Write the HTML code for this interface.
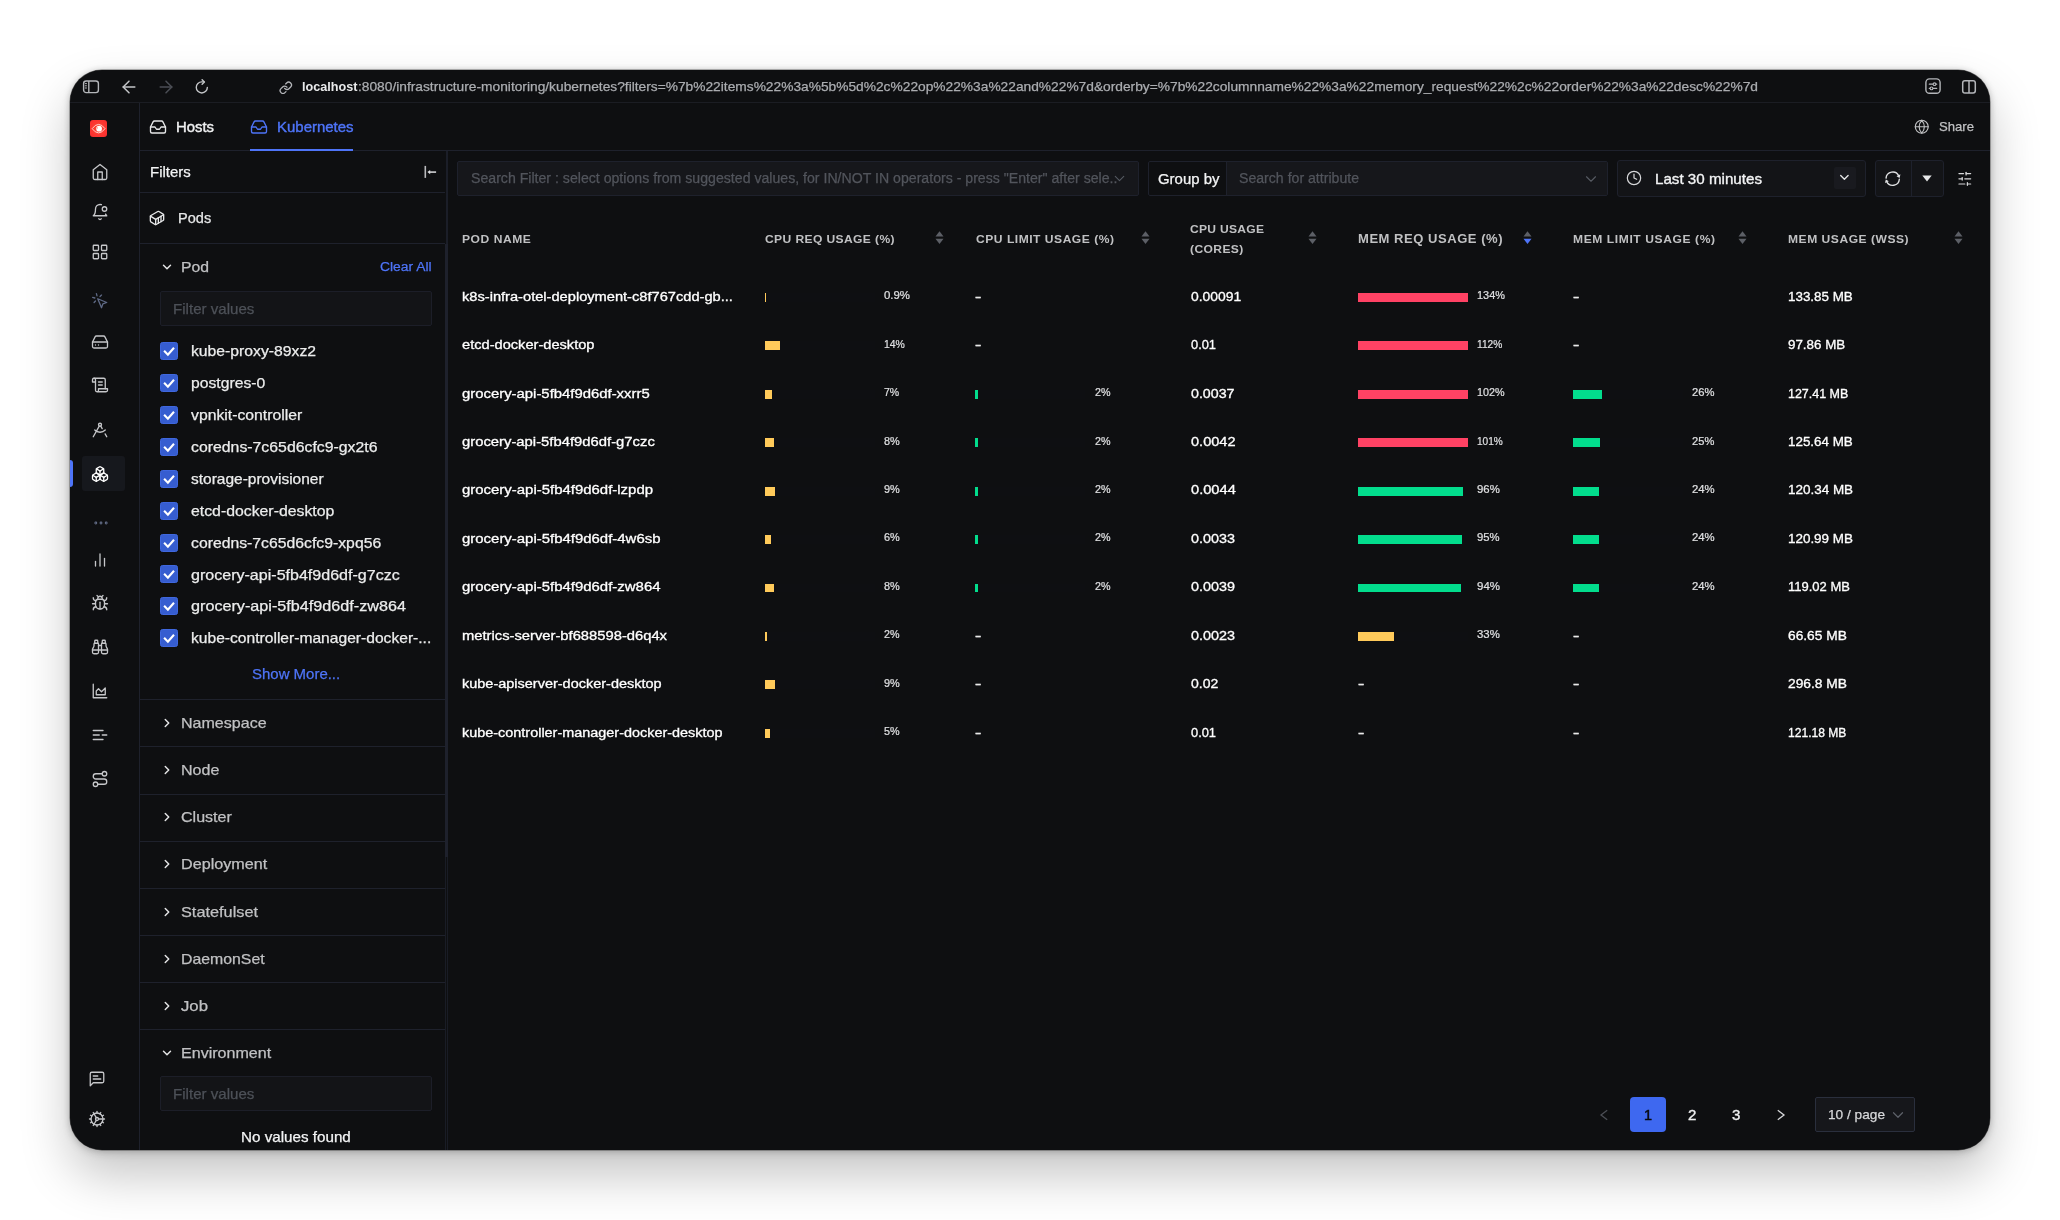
<!DOCTYPE html><html><head><meta charset="utf-8"><title>Infrastructure Monitoring</title><style>
html,body{margin:0;padding:0;background:#fff;}body{width:2060px;height:1220px;position:relative;overflow:hidden;font-family:"Liberation Sans", sans-serif;}.a{position:absolute;box-sizing:border-box;}.t{position:absolute;white-space:pre;}#win{position:absolute;left:70px;top:70px;width:1920px;height:1080px;border-radius:32px;background:#0e0f11;box-shadow:0 25px 50px rgba(0,0,0,0.23), 0 3px 10px rgba(0,0,0,0.14), 0 0 6px rgba(0,0,0,0.14), 0 0 0 0.5px rgba(0,0,0,0.5);}#clip{position:absolute;left:70px;top:70px;width:1920px;height:1080px;border-radius:32px;overflow:hidden;}#in{position:absolute;left:-70px;top:-70px;width:2060px;height:1220px;will-change:transform;}
</style></head><body><div id="win"></div><div id="clip"><div id="in">
<div class="a" style="left:70px;top:102px;width:1920px;height:1px;background:#1b1d23;"></div>
<svg class="a" style="left:82px;top:79px" width="18" height="16" viewBox="0 0 18 16" fill="none" stroke="#b4b6ba" stroke-width="1.4"><rect x="1.6" y="2" width="14.8" height="11.6" rx="2.6"/><path d="M6.800 2v11.600"/><path d="M2.9 4.6h2M2.9 6.8h2M2.9 9h2" stroke-width="1" /></svg>
<svg class="a" style="left:118.50px;top:76.80px;" width="20" height="20" viewBox="0 0 24 24" fill="none" stroke="#c4c6c9" stroke-width="1.8" stroke-linecap="round" stroke-linejoin="round"><path d="m12 19-7-7 7-7"/><path d="M19 12H5"/></svg>
<svg class="a" style="left:155.50px;top:76.80px;" width="20" height="20" viewBox="0 0 24 24" fill="none" stroke="#4b4e55" stroke-width="1.8" stroke-linecap="round" stroke-linejoin="round"><path d="M5 12h14"/><path d="m12 5 7 7-7 7"/></svg>
<svg class="a" style="left:194.20px;top:79.40px;" width="15.6" height="15.6" viewBox="0 0 24 24" fill="none" stroke="#c4c6c9" stroke-width="2.1" stroke-linecap="round" stroke-linejoin="round"><path d="M20.500 13a8.500 8.500 0 1 1-8.500-8.500h3.500"/><path d="M12.500 1 16 4.500 12.500 8"/></svg>
<svg class="a" style="left:279.00px;top:80.50px;" width="13.6" height="13.6" viewBox="0 0 24 24" fill="none" stroke="#b4b6ba" stroke-width="2.3" stroke-linecap="round" stroke-linejoin="round"><path d="M10 13a5 5 0 0 0 7.540.540l3-3a5 5 0 0 0-7.070-7.070l-1.720 1.710"/><path d="M14 11a5 5 0 0 0-7.540-.540l-3 3a5 5 0 0 0 7.070 7.070l1.710-1.710"/></svg>
<svg class="a" style="left:1924px;top:77px" width="18" height="18" viewBox="0 0 18 18" fill="none" stroke="#b4b6ba" stroke-width="1.4" stroke-linecap="round"><rect x="1.900" y="1.900" width="14.200" height="14.400" rx="3.600"/><path d="M5.300 7.200h7.400M5.300 11.400h7.400" stroke-width="1.200"/><circle cx="10.500" cy="7.200" r="1.350" fill="#0e0f11" stroke-width="1.100"/><circle cx="7.500" cy="11.400" r="1.350" fill="#0e0f11" stroke-width="1.100"/></svg>
<svg class="a" style="left:1960px;top:78px" width="18" height="17" viewBox="0 0 18 17" fill="none" stroke="#b4b6ba" stroke-width="1.5"><rect x="2.700" y="2.750" width="12.600" height="12.300" rx="2.200"/><path d="M9 2.750v12.300"/></svg>
<div class="a" style="left:139px;top:103px;width:1px;height:1047px;background:#1e212c;"></div>
<div class="a" style="left:90px;top:120px;width:17px;height:17px;border-radius:3px;background:radial-gradient(circle at 50% 50%,#ff4a35 0%,#fb3530 60%,#f72c2e 100%);"></div>
<svg class="a" style="left:90px;top:120px" width="17" height="17" viewBox="0 0 17 17" fill="none"><path d="M2.200 8.650Q5.200 4.400 8.600 4.400Q12 4.400 15 8.650Q12 12.900 8.600 12.900Q5.200 12.900 2.200 8.650z" stroke="#ffd9d4" stroke-width="0.950" stroke-linejoin="round"/><circle cx="9.100" cy="8.650" r="2.850" fill="#fff"/><circle cx="7.300" cy="7.900" r="0.700" fill="#ff8a78"/></svg>
<svg class="a" style="left:91.00px;top:163.30px;" width="18" height="18" viewBox="0 0 24 24" fill="none" stroke="#c6c7ca" stroke-width="1.75" stroke-linecap="round" stroke-linejoin="round"><path d="m3 9 9-7 9 7v11a2 2 0 0 1-2 2H5a2 2 0 0 1-2-2z"/><polyline points="9 22 9 12 15 12 15 22"/></svg>
<svg class="a" style="left:91.00px;top:202.50px;" width="18" height="18" viewBox="0 0 24 24" fill="none" stroke="#c6c7ca" stroke-width="1.75" stroke-linecap="round" stroke-linejoin="round"><path d="M19.4 14.9C20.2 16.4 21 17 21 17H3s3-2 3-9c0-3.3 2.7-6 6-6 .7 0 1.3.1 1.9.3"/><path d="M10.3 21a1.94 1.94 0 0 0 3.4 0"/><circle cx="18" cy="8" r="3"/></svg>
<svg class="a" style="left:91.00px;top:242.80px;" width="18" height="18" viewBox="0 0 24 24" fill="none" stroke="#c6c7ca" stroke-width="1.75" stroke-linecap="round" stroke-linejoin="round"><rect width="7" height="7" x="3" y="3" rx="1"/><rect width="7" height="7" x="14" y="3" rx="1"/><rect width="7" height="7" x="14" y="14" rx="1"/><rect width="7" height="7" x="3" y="14" rx="1"/></svg>
<svg class="a" style="left:91.00px;top:291.50px;" width="18" height="18" viewBox="0 0 24 24" fill="none" stroke="#5f6a86" stroke-width="1.75" stroke-linecap="round" stroke-linejoin="round"><path d="m9 9 5 12 1.8-5.2L21 14Z"/><path d="M7.2 2.2 8 5.1"/><path d="m5.100 8-2.900-.8"/><path d="M14 4.100 12 6"/><path d="m6 12-1.900 2"/></svg>
<svg class="a" style="left:91.00px;top:332.80px;" width="18" height="18" viewBox="0 0 24 24" fill="none" stroke="#c6c7ca" stroke-width="1.75" stroke-linecap="round" stroke-linejoin="round"><line x1="22" x2="2" y1="12" y2="12"/><path d="M5.450 5.110 2 12v6a2 2 0 0 0 2 2h16a2 2 0 0 0 2-2v-6l-3.450-6.890A2 2 0 0 0 16.760 4H7.240a2 2 0 0 0-1.790 1.110z"/><line x1="6" x2="6.010" y1="16" y2="16"/><line x1="10" x2="10.010" y1="16" y2="16"/></svg>
<svg class="a" style="left:91.00px;top:376.40px;" width="18" height="18" viewBox="0 0 24 24" fill="none" stroke="#c6c7ca" stroke-width="1.75" stroke-linecap="round" stroke-linejoin="round"><path d="M8 21h12a2 2 0 0 0 2-2v-2H10v2a2 2 0 1 1-4 0V5a2 2 0 1 0-4 0v3h4"/><path d="M19 17V5a2 2 0 0 0-2-2H4"/><path d="M15 8h-5"/><path d="M15 12h-5"/></svg>
<svg class="a" style="left:91.00px;top:420.80px;" width="18" height="18" viewBox="0 0 24 24" fill="none" stroke="#c6c7ca" stroke-width="1.75" stroke-linecap="round" stroke-linejoin="round"><circle cx="12" cy="5" r="2"/><path d="m3 21 8.020-14.260"/><path d="m12.990 6.740 1.930 3.440"/><path d="M19 12c-3.870 4-10.130 4-14 0"/><path d="m21 21-2.160-3.840"/></svg>
<div class="a" style="left:82px;top:456px;width:43px;height:35px;background:#16181d;border-radius:3px;"></div>
<div class="a" style="left:70px;top:460px;width:3px;height:27px;background:#4e74f8;border-radius:0 3px 3px 0;"></div>
<svg class="a" style="left:91.00px;top:465.00px;" width="18" height="18" viewBox="0 0 24 24" fill="none" stroke="#ffffff" stroke-width="1.75" stroke-linecap="round" stroke-linejoin="round"><path d="M2.970 12.920A2 2 0 0 0 2 14.630v3.240a2 2 0 0 0 .970 1.710l3 1.800a2 2 0 0 0 2.060 0L12 19v-5.500l-5-3-4.030 2.420Z"/><path d="m7 16.500-4.740-2.850"/><path d="m7 16.500 5-3"/><path d="M7 16.500v5.170"/><path d="M12 13.500V19l3.970 2.380a2 2 0 0 0 2.060 0l3-1.800a2 2 0 0 0 .970-1.710v-3.240a2 2 0 0 0-.970-1.710L17 10.500l-5 3Z"/><path d="m17 16.500-5-3"/><path d="m17 16.500 4.740-2.850"/><path d="M17 16.500v5.170"/><path d="M7.970 4.420A2 2 0 0 0 7 6.130v4.370l5 3 5-3V6.130a2 2 0 0 0-.970-1.710l-3-1.800a2 2 0 0 0-2.060 0l-3 1.800Z"/><path d="M12 8 7.260 5.150"/><path d="m12 8 4.740-2.850"/><path d="M12 13.500V8"/></svg>
<svg class="a" style="left:91.60px;top:513.70px;" width="18" height="18" viewBox="0 0 24 24" fill="none" stroke="#6a7592" stroke-width="2.6" stroke-linecap="round" stroke-linejoin="round"><circle cx="12" cy="12" r="0.6"/><circle cx="18.9" cy="12" r="0.6"/><circle cx="5.1" cy="12" r="0.6"/></svg>
<svg class="a" style="left:91.00px;top:551.40px;" width="18" height="18" viewBox="0 0 24 24" fill="none" stroke="#c6c7ca" stroke-width="1.75" stroke-linecap="round" stroke-linejoin="round"><line x1="18" x2="18" y1="20" y2="10"/><line x1="12" x2="12" y1="20" y2="4"/><line x1="6" x2="6" y1="20" y2="14"/></svg>
<svg class="a" style="left:91.00px;top:594.30px;" width="18" height="18" viewBox="0 0 24 24" fill="none" stroke="#c6c7ca" stroke-width="1.75" stroke-linecap="round" stroke-linejoin="round"><path d="m8 2 1.880 1.880"/><path d="M14.120 3.880 16 2"/><path d="M9 7.130v-1a3.003 3.003 0 1 1 6 0v1"/><path d="M12 20c-3.300 0-6-2.700-6-6v-3a4 4 0 0 1 4-4h4a4 4 0 0 1 4 4v3c0 3.300-2.700 6-6 6"/><path d="M12 20v-9"/><path d="M6.530 9C4.600 8.800 3 7.100 3 5"/><path d="M6 13H2"/><path d="M3 21c0-2.100 1.700-3.900 3.800-4"/><path d="M20.970 5c0 2.100-1.600 3.800-3.500 4"/><path d="M22 13h-4"/><path d="M17.200 17c2.100.1 3.800 1.900 3.800 4"/></svg>
<svg class="a" style="left:91.00px;top:638.40px;" width="18" height="18" viewBox="0 0 24 24" fill="none" stroke="#c6c7ca" stroke-width="1.75" stroke-linecap="round" stroke-linejoin="round"><path d="M10 10h4"/><path d="M19 7V4a1 1 0 0 0-1-1h-2a1 1 0 0 0-1 1v3"/><path d="M20 21a2 2 0 0 0 2-2v-3.851c0-1.390-2-2.962-2-4.829V8a1 1 0 0 0-1-1h-4a1 1 0 0 0-1 1v11a2 2 0 0 0 2 2z"/><path d="M22 16H2"/><path d="M4 21a2 2 0 0 1-2-2v-3.851c0-1.390 2-2.962 2-4.829V8a1 1 0 0 1 1-1h4a1 1 0 0 1 1 1v11a2 2 0 0 1-2 2z"/><path d="M9 7V4a1 1 0 0 0-1-1H6a1 1 0 0 0-1 1v3"/></svg>
<svg class="a" style="left:91.00px;top:681.70px;" width="18" height="18" viewBox="0 0 24 24" fill="none" stroke="#c6c7ca" stroke-width="1.75" stroke-linecap="round" stroke-linejoin="round"><path d="M3 3v18h18"/><path d="M7 12v5h12V8l-5 5-4-4Z"/></svg>
<svg class="a" style="left:91.00px;top:725.50px;" width="18" height="18" viewBox="0 0 24 24" fill="none" stroke="#c6c7ca" stroke-width="1.75" stroke-linecap="round" stroke-linejoin="round"><path d="M11 12H3"/><path d="M16 6H3"/><path d="M16 18H3"/><path d="M21 12h-6"/></svg>
<svg class="a" style="left:91.00px;top:769.60px;" width="18" height="18" viewBox="0 0 24 24" fill="none" stroke="#c6c7ca" stroke-width="1.75" stroke-linecap="round" stroke-linejoin="round"><circle cx="6" cy="19" r="3"/><path d="M9 19h8.500a3.500 3.500 0 0 0 0-7h-11a3.500 3.500 0 0 1 0-7H15"/><circle cx="18" cy="5" r="3"/></svg>
<svg class="a" style="left:87.70px;top:1070.30px;" width="18" height="18" viewBox="0 0 24 24" fill="none" stroke="#c6c7ca" stroke-width="1.75" stroke-linecap="round" stroke-linejoin="round"><path d="M21 15a2 2 0 0 1-2 2H7l-4 4V5a2 2 0 0 1 2-2h14a2 2 0 0 1 2 2z"/><path d="M13 8H7"/><path d="M17 12H7"/></svg>
<svg class="a" style="left:87.70px;top:1109.70px;" width="18" height="18" viewBox="0 0 24 24" fill="none" stroke="#c6c7ca" stroke-width="1.75" stroke-linecap="round" stroke-linejoin="round"><path d="M12 20a8 8 0 1 0 0-16 8 8 0 0 0 0 16Z"/><path d="M12 14a2 2 0 1 0 0-4 2 2 0 0 0 0 4Z"/><path d="M12 2v2"/><path d="M12 22v-2"/><path d="m17 20.660-1-1.730"/><path d="M11 10.270 7 3.340"/><path d="m20.660 17-1.730-1"/><path d="m3.340 7 1.730 1"/><path d="M14 12h8"/><path d="M2 12h2"/><path d="m20.660 7-1.730 1"/><path d="m3.340 17 1.730-1"/><path d="m17 3.340-1 1.730"/><path d="m11 13.730-4 6.930"/></svg>
<div class="a" style="left:140px;top:150px;width:1850px;height:1px;background:#1e212c;"></div>
<svg class="a" style="left:149.00px;top:118.00px;" width="18" height="18" viewBox="0 0 24 24" fill="none" stroke="#e6e7e8" stroke-width="1.8" stroke-linecap="round" stroke-linejoin="round"><polyline points="22 12 16 12 14 15 10 15 8 12 2 12"/><path d="M5.450 5.110 2 12v6a2 2 0 0 0 2 2h16a2 2 0 0 0 2-2v-6l-3.450-6.890A2 2 0 0 0 16.760 4H7.240a2 2 0 0 0-1.790 1.110z"/></svg>
<svg class="a" style="left:250.00px;top:118.00px;" width="18" height="18" viewBox="0 0 24 24" fill="none" stroke="#4e74f8" stroke-width="1.8" stroke-linecap="round" stroke-linejoin="round"><polyline points="22 12 16 12 14 15 10 15 8 12 2 12"/><path d="M5.450 5.110 2 12v6a2 2 0 0 0 2 2h16a2 2 0 0 0 2-2v-6l-3.450-6.890A2 2 0 0 0 16.760 4H7.240a2 2 0 0 0-1.790 1.110z"/></svg>
<div class="a" style="left:250px;top:148.5px;width:103px;height:2px;background:#4e74f8;"></div>
<svg class="a" style="left:1913.95px;top:118.55px;" width="15.5" height="15.5" viewBox="0 0 24 24" fill="none" stroke="#c0c1c3" stroke-width="1.8" stroke-linecap="round" stroke-linejoin="round"><circle cx="12" cy="12" r="10"/><path d="M12 2a14.500 14.500 0 0 0 0 20 14.500 14.500 0 0 0 0-20"/><path d="M2 12h20"/></svg>
<div class="a" style="left:446px;top:151px;width:2px;height:93px;background:#1b1e28;"></div>
<div class="a" style="left:445px;top:244px;width:3px;height:613px;background:#1e212c;"></div>
<div class="a" style="left:445px;top:857px;width:1px;height:293px;background:#191c25;"></div>
<div class="a" style="left:447px;top:857px;width:1px;height:293px;background:#191c25;"></div>
<svg class="a" style="left:423px;top:165px" width="14" height="14" viewBox="0 0 14 14" fill="none" stroke="#b9babd" stroke-width="1.600"><path d="M2.300 0.900v12"/><path d="M13.100 7.100H6.500" stroke-width="1.800"/><path d="M7.200 4.900 4.400 7.100 7.200 9.300z" fill="#dcdde0" stroke="none"/></svg>
<div class="a" style="left:140px;top:192px;width:305px;height:1px;background:#1e212c;"></div>
<svg class="a" style="left:149.00px;top:210.00px;" width="16" height="16" viewBox="0 0 24 24" fill="none" stroke="#e6e7e8" stroke-width="2" stroke-linecap="round" stroke-linejoin="round"><path d="M22 7.700c0-.6-.4-1.200-.8-1.500l-6.300-3.900a1.720 1.720 0 0 0-1.700 0l-10.300 6c-.5.200-.9.800-.9 1.400v6.600c0 .5.400 1.200.8 1.500l6.300 3.900a1.720 1.720 0 0 0 1.700 0l10.300-6c.5-.3.900-1 .9-1.500Z"/><path d="M10 21.900V14L2.100 9.100"/><path d="m10 14 11.900-6.900"/><path d="M14 19.800v-8.100"/><path d="M18 17.500V9.400"/></svg>
<div class="a" style="left:140px;top:243px;width:305px;height:1px;background:#1e212c;"></div>
<svg class="a" style="left:160.00px;top:260.00px;" width="14" height="14" viewBox="0 0 24 24" fill="none" stroke="#e4e5e6" stroke-width="2.5" stroke-linecap="round" stroke-linejoin="round"><path d="m6 9 6 6 6-6"/></svg>
<div class="a" style="left:160px;top:291px;width:272px;height:35px;background:#131417;border:1px solid #1c1e28;border-radius:2px;"></div>
<div class="a" style="left:160px;top:342px;width:18px;height:18px;background:#365dd0;border:1px solid #3f67de;border-radius:2.5px;"></div>
<svg class="a" style="left:160px;top:342px" width="18" height="18" viewBox="0 0 18 18" fill="none" stroke="#fff" stroke-width="2.1" stroke-linecap="butt" stroke-linejoin="miter"><path d="M4.100 8.700 7.900 12.700 14 5.700"/></svg>
<div class="a" style="left:160px;top:374px;width:18px;height:18px;background:#365dd0;border:1px solid #3f67de;border-radius:2.5px;"></div>
<svg class="a" style="left:160px;top:374px" width="18" height="18" viewBox="0 0 18 18" fill="none" stroke="#fff" stroke-width="2.1" stroke-linecap="butt" stroke-linejoin="miter"><path d="M4.100 8.700 7.900 12.700 14 5.700"/></svg>
<div class="a" style="left:160px;top:406px;width:18px;height:18px;background:#365dd0;border:1px solid #3f67de;border-radius:2.5px;"></div>
<svg class="a" style="left:160px;top:406px" width="18" height="18" viewBox="0 0 18 18" fill="none" stroke="#fff" stroke-width="2.1" stroke-linecap="butt" stroke-linejoin="miter"><path d="M4.100 8.700 7.900 12.700 14 5.700"/></svg>
<div class="a" style="left:160px;top:438px;width:18px;height:18px;background:#365dd0;border:1px solid #3f67de;border-radius:2.5px;"></div>
<svg class="a" style="left:160px;top:438px" width="18" height="18" viewBox="0 0 18 18" fill="none" stroke="#fff" stroke-width="2.1" stroke-linecap="butt" stroke-linejoin="miter"><path d="M4.100 8.700 7.900 12.700 14 5.700"/></svg>
<div class="a" style="left:160px;top:470px;width:18px;height:18px;background:#365dd0;border:1px solid #3f67de;border-radius:2.5px;"></div>
<svg class="a" style="left:160px;top:470px" width="18" height="18" viewBox="0 0 18 18" fill="none" stroke="#fff" stroke-width="2.1" stroke-linecap="butt" stroke-linejoin="miter"><path d="M4.100 8.700 7.900 12.700 14 5.700"/></svg>
<div class="a" style="left:160px;top:502px;width:18px;height:18px;background:#365dd0;border:1px solid #3f67de;border-radius:2.5px;"></div>
<svg class="a" style="left:160px;top:502px" width="18" height="18" viewBox="0 0 18 18" fill="none" stroke="#fff" stroke-width="2.1" stroke-linecap="butt" stroke-linejoin="miter"><path d="M4.100 8.700 7.900 12.700 14 5.700"/></svg>
<div class="a" style="left:160px;top:534px;width:18px;height:18px;background:#365dd0;border:1px solid #3f67de;border-radius:2.5px;"></div>
<svg class="a" style="left:160px;top:534px" width="18" height="18" viewBox="0 0 18 18" fill="none" stroke="#fff" stroke-width="2.1" stroke-linecap="butt" stroke-linejoin="miter"><path d="M4.100 8.700 7.900 12.700 14 5.700"/></svg>
<div class="a" style="left:160px;top:565px;width:18px;height:18px;background:#365dd0;border:1px solid #3f67de;border-radius:2.5px;"></div>
<svg class="a" style="left:160px;top:565px" width="18" height="18" viewBox="0 0 18 18" fill="none" stroke="#fff" stroke-width="2.1" stroke-linecap="butt" stroke-linejoin="miter"><path d="M4.100 8.700 7.900 12.700 14 5.700"/></svg>
<div class="a" style="left:160px;top:597px;width:18px;height:18px;background:#365dd0;border:1px solid #3f67de;border-radius:2.5px;"></div>
<svg class="a" style="left:160px;top:597px" width="18" height="18" viewBox="0 0 18 18" fill="none" stroke="#fff" stroke-width="2.1" stroke-linecap="butt" stroke-linejoin="miter"><path d="M4.100 8.700 7.900 12.700 14 5.700"/></svg>
<div class="a" style="left:160px;top:629px;width:18px;height:18px;background:#365dd0;border:1px solid #3f67de;border-radius:2.5px;"></div>
<svg class="a" style="left:160px;top:629px" width="18" height="18" viewBox="0 0 18 18" fill="none" stroke="#fff" stroke-width="2.1" stroke-linecap="butt" stroke-linejoin="miter"><path d="M4.100 8.700 7.900 12.700 14 5.700"/></svg>
<div class="a" style="left:140px;top:699px;width:305px;height:1px;background:#1e212c;"></div>
<svg class="a" style="left:160.00px;top:715.90px;" width="14" height="14" viewBox="0 0 24 24" fill="none" stroke="#e4e5e6" stroke-width="2.5" stroke-linecap="round" stroke-linejoin="round"><path d="m9 18 6-6-6-6"/></svg>
<div class="a" style="left:140px;top:746px;width:305px;height:1px;background:#1e212c;"></div>
<svg class="a" style="left:160.00px;top:763.07px;" width="14" height="14" viewBox="0 0 24 24" fill="none" stroke="#e4e5e6" stroke-width="2.5" stroke-linecap="round" stroke-linejoin="round"><path d="m9 18 6-6-6-6"/></svg>
<div class="a" style="left:140px;top:794px;width:305px;height:1px;background:#1e212c;"></div>
<svg class="a" style="left:160.00px;top:810.24px;" width="14" height="14" viewBox="0 0 24 24" fill="none" stroke="#e4e5e6" stroke-width="2.5" stroke-linecap="round" stroke-linejoin="round"><path d="m9 18 6-6-6-6"/></svg>
<div class="a" style="left:140px;top:841px;width:305px;height:1px;background:#1e212c;"></div>
<svg class="a" style="left:160.00px;top:857.41px;" width="14" height="14" viewBox="0 0 24 24" fill="none" stroke="#e4e5e6" stroke-width="2.5" stroke-linecap="round" stroke-linejoin="round"><path d="m9 18 6-6-6-6"/></svg>
<div class="a" style="left:140px;top:888px;width:305px;height:1px;background:#1e212c;"></div>
<svg class="a" style="left:160.00px;top:904.58px;" width="14" height="14" viewBox="0 0 24 24" fill="none" stroke="#e4e5e6" stroke-width="2.5" stroke-linecap="round" stroke-linejoin="round"><path d="m9 18 6-6-6-6"/></svg>
<div class="a" style="left:140px;top:935px;width:305px;height:1px;background:#1e212c;"></div>
<svg class="a" style="left:160.00px;top:951.75px;" width="14" height="14" viewBox="0 0 24 24" fill="none" stroke="#e4e5e6" stroke-width="2.5" stroke-linecap="round" stroke-linejoin="round"><path d="m9 18 6-6-6-6"/></svg>
<div class="a" style="left:140px;top:982px;width:305px;height:1px;background:#1e212c;"></div>
<svg class="a" style="left:160.00px;top:998.92px;" width="14" height="14" viewBox="0 0 24 24" fill="none" stroke="#e4e5e6" stroke-width="2.5" stroke-linecap="round" stroke-linejoin="round"><path d="m9 18 6-6-6-6"/></svg>
<div class="a" style="left:140px;top:1029px;width:305px;height:1px;background:#1e212c;"></div>
<svg class="a" style="left:160.00px;top:1046.09px;" width="14" height="14" viewBox="0 0 24 24" fill="none" stroke="#e4e5e6" stroke-width="2.5" stroke-linecap="round" stroke-linejoin="round"><path d="m6 9 6 6 6-6"/></svg>
<div class="a" style="left:160px;top:1076px;width:272px;height:35px;background:#131417;border:1px solid #1c1e28;border-radius:2px;"></div>
<div class="a" style="left:457px;top:161px;width:682px;height:35px;background:#16171b;border:1px solid #1e212c;border-radius:2px;"></div>
<svg class="a" style="left:1110.50px;top:170.20px;" width="17" height="17" viewBox="0 0 24 24" fill="none" stroke="#565a62" stroke-width="1.5" stroke-linecap="round" stroke-linejoin="round"><path d="m6 9 6 6 6-6"/></svg>
<div class="a" style="left:1148px;top:161px;width:460px;height:35px;background:#0e0f11;border:1px solid #1e212c;border-radius:2px;"></div>
<div class="a" style="left:1226px;top:162px;width:381px;height:33px;background:#16171b;border-left:1px solid #1e212c;"></div>
<svg class="a" style="left:1581.60px;top:169.70px;" width="18" height="18" viewBox="0 0 24 24" fill="none" stroke="#565a62" stroke-width="1.5" stroke-linecap="round" stroke-linejoin="round"><path d="m6 9 6 6 6-6"/></svg>
<div class="a" style="left:1617px;top:160px;width:249px;height:37px;background:#131417;border:1px solid #1e212c;border-radius:3px;"></div>
<svg class="a" style="left:1625.70px;top:170.40px;" width="16" height="16" viewBox="0 0 24 24" fill="none" stroke="#d7d8da" stroke-width="1.8" stroke-linecap="round" stroke-linejoin="round"><circle cx="12" cy="12" r="10"/><polyline points="12 6 12 12 16 14"/></svg>
<div class="a" style="left:1834px;top:167px;width:22px;height:22px;background:#191a1f;border-radius:2px;"></div>
<svg class="a" style="left:1837.40px;top:170.40px;" width="14.8" height="14.8" viewBox="0 0 24 24" fill="none" stroke="#e4e5e6" stroke-width="2.2" stroke-linecap="round" stroke-linejoin="round"><path d="m6 9 6 6 6-6"/></svg>
<div class="a" style="left:1875px;top:160px;width:69px;height:37px;background:#131417;border:1px solid #1e212c;border-radius:3px;"></div>
<div class="a" style="left:1911px;top:161px;width:1px;height:35px;background:#1e212c;"></div>
<svg class="a" style="left:1884.10px;top:169.90px;" width="17.4" height="17.4" viewBox="0 0 24 24" fill="none" stroke="#e0e1e3" stroke-width="1.9" stroke-linecap="round" stroke-linejoin="round"><path d="M2.830 11.200A9.200 9.200 0 0 1 20.340 8.110"/><path d="M21.170 12.800A9.200 9.200 0 0 1 3.660 15.890"/><path d="M21.500 10.900 22.700 5.900 17.300 8.500z" fill="#e0e1e3" stroke="none"/><path d="M2.500 13.100 1.300 18.100 6.700 15.500z" fill="#e0e1e3" stroke="none"/></svg>
<svg class="a" style="left:1922.400px;top:175px" width="10" height="7" viewBox="0 0 10 7"><path d="M0.300 0.500h9.400L5 6.500z" fill="#e6e7e8"/></svg>
<svg class="a" style="left:1956.80px;top:170.70px;" width="15.6" height="15.6" viewBox="0 0 24 24" fill="none" stroke="#d7d8da" stroke-width="1.9" stroke-linecap="round" stroke-linejoin="round"><line x1="21" x2="14" y1="4" y2="4"/><line x1="10" x2="3" y1="4" y2="4"/><line x1="21" x2="12" y1="12" y2="12"/><line x1="8" x2="3" y1="12" y2="12"/><line x1="21" x2="16" y1="20" y2="20"/><line x1="12" x2="3" y1="20" y2="20"/><line x1="14" x2="14" y1="2" y2="6"/><line x1="8" x2="8" y1="10" y2="14"/><line x1="16" x2="16" y1="18" y2="22"/></svg>
<svg class="a" style="left:934.8px;top:230.800px" width="9" height="14" viewBox="0 0 9 14"><path d="M0.500 5.400 4.500 0.300 8.500 5.400z" fill="#5c5f66"/><path d="M0.500 7.800 4.500 12.900 8.500 7.800z" fill="#5c5f66"/></svg>
<svg class="a" style="left:1140.8px;top:230.800px" width="9" height="14" viewBox="0 0 9 14"><path d="M0.500 5.400 4.500 0.300 8.500 5.400z" fill="#5c5f66"/><path d="M0.500 7.800 4.500 12.900 8.500 7.800z" fill="#5c5f66"/></svg>
<svg class="a" style="left:1308.0px;top:230.800px" width="9" height="14" viewBox="0 0 9 14"><path d="M0.500 5.400 4.500 0.300 8.500 5.400z" fill="#5c5f66"/><path d="M0.500 7.800 4.500 12.900 8.500 7.800z" fill="#5c5f66"/></svg>
<svg class="a" style="left:1522.9px;top:230.800px" width="9" height="14" viewBox="0 0 9 14"><path d="M0.500 5.400 4.500 0.300 8.500 5.400z" fill="#5c5f66"/><path d="M0.500 7.800 4.500 12.900 8.500 7.800z" fill="#4e74f8"/></svg>
<svg class="a" style="left:1737.8px;top:230.800px" width="9" height="14" viewBox="0 0 9 14"><path d="M0.500 5.400 4.500 0.300 8.500 5.400z" fill="#5c5f66"/><path d="M0.500 7.800 4.500 12.900 8.500 7.800z" fill="#5c5f66"/></svg>
<svg class="a" style="left:1954.0px;top:230.800px" width="9" height="14" viewBox="0 0 9 14"><path d="M0.500 5.400 4.500 0.300 8.500 5.400z" fill="#5c5f66"/><path d="M0.500 7.800 4.500 12.900 8.500 7.800z" fill="#5c5f66"/></svg>
<div class="a" style="left:764.8px;top:293.0px;width:110px;height:8.9px;background:#0e0f12;"></div>
<div class="a" style="left:764.8px;top:293.0px;width:1px;height:8.9px;background:#ffca5a;"></div>
<div class="a" style="left:1357.9px;top:293.0px;width:110px;height:8.9px;background:#0e0f12;"></div>
<div class="a" style="left:1357.9px;top:293.0px;width:110px;height:8.9px;background:#ff4264;"></div>
<div class="a" style="left:764.8px;top:341.43px;width:110px;height:8.9px;background:#0e0f12;"></div>
<div class="a" style="left:764.8px;top:341.43px;width:15.4px;height:8.9px;background:#ffca5a;"></div>
<div class="a" style="left:1357.9px;top:341.43px;width:110px;height:8.9px;background:#0e0f12;"></div>
<div class="a" style="left:1357.9px;top:341.43px;width:110px;height:8.9px;background:#ff4264;"></div>
<div class="a" style="left:764.8px;top:389.86px;width:110px;height:8.9px;background:#0e0f12;"></div>
<div class="a" style="left:764.8px;top:389.86px;width:7.5px;height:8.9px;background:#ffca5a;"></div>
<div class="a" style="left:974.9px;top:389.86px;width:110px;height:8.9px;background:#0e0f12;"></div>
<div class="a" style="left:974.9px;top:389.86px;width:3px;height:8.9px;background:#02dd8d;"></div>
<div class="a" style="left:1357.9px;top:389.86px;width:110px;height:8.9px;background:#0e0f12;"></div>
<div class="a" style="left:1357.9px;top:389.86px;width:110px;height:8.9px;background:#ff4264;"></div>
<div class="a" style="left:1573px;top:389.86px;width:110px;height:8.9px;background:#0e0f12;"></div>
<div class="a" style="left:1573px;top:389.86px;width:28.6px;height:8.9px;background:#02dd8d;"></div>
<div class="a" style="left:764.8px;top:438.28999999999996px;width:110px;height:8.9px;background:#0e0f12;"></div>
<div class="a" style="left:764.8px;top:438.28999999999996px;width:9px;height:8.9px;background:#ffca5a;"></div>
<div class="a" style="left:974.9px;top:438.28999999999996px;width:110px;height:8.9px;background:#0e0f12;"></div>
<div class="a" style="left:974.9px;top:438.28999999999996px;width:3px;height:8.9px;background:#02dd8d;"></div>
<div class="a" style="left:1357.9px;top:438.28999999999996px;width:110px;height:8.9px;background:#0e0f12;"></div>
<div class="a" style="left:1357.9px;top:438.28999999999996px;width:110px;height:8.9px;background:#ff4264;"></div>
<div class="a" style="left:1573px;top:438.28999999999996px;width:110px;height:8.9px;background:#0e0f12;"></div>
<div class="a" style="left:1573px;top:438.28999999999996px;width:27.3px;height:8.9px;background:#02dd8d;"></div>
<div class="a" style="left:764.8px;top:486.72px;width:110px;height:8.9px;background:#0e0f12;"></div>
<div class="a" style="left:764.8px;top:486.72px;width:10px;height:8.9px;background:#ffca5a;"></div>
<div class="a" style="left:974.9px;top:486.72px;width:110px;height:8.9px;background:#0e0f12;"></div>
<div class="a" style="left:974.9px;top:486.72px;width:3px;height:8.9px;background:#02dd8d;"></div>
<div class="a" style="left:1357.9px;top:486.72px;width:110px;height:8.9px;background:#0e0f12;"></div>
<div class="a" style="left:1357.9px;top:486.72px;width:105.6px;height:8.9px;background:#02dd8d;"></div>
<div class="a" style="left:1573px;top:486.72px;width:110px;height:8.9px;background:#0e0f12;"></div>
<div class="a" style="left:1573px;top:486.72px;width:26.4px;height:8.9px;background:#02dd8d;"></div>
<div class="a" style="left:764.8px;top:535.15px;width:110px;height:8.9px;background:#0e0f12;"></div>
<div class="a" style="left:764.8px;top:535.15px;width:6.6px;height:8.9px;background:#ffca5a;"></div>
<div class="a" style="left:974.9px;top:535.15px;width:110px;height:8.9px;background:#0e0f12;"></div>
<div class="a" style="left:974.9px;top:535.15px;width:3px;height:8.9px;background:#02dd8d;"></div>
<div class="a" style="left:1357.9px;top:535.15px;width:110px;height:8.9px;background:#0e0f12;"></div>
<div class="a" style="left:1357.9px;top:535.15px;width:104.5px;height:8.9px;background:#02dd8d;"></div>
<div class="a" style="left:1573px;top:535.15px;width:110px;height:8.9px;background:#0e0f12;"></div>
<div class="a" style="left:1573px;top:535.15px;width:26.4px;height:8.9px;background:#02dd8d;"></div>
<div class="a" style="left:764.8px;top:583.58px;width:110px;height:8.9px;background:#0e0f12;"></div>
<div class="a" style="left:764.8px;top:583.58px;width:9px;height:8.9px;background:#ffca5a;"></div>
<div class="a" style="left:974.9px;top:583.58px;width:110px;height:8.9px;background:#0e0f12;"></div>
<div class="a" style="left:974.9px;top:583.58px;width:3px;height:8.9px;background:#02dd8d;"></div>
<div class="a" style="left:1357.9px;top:583.58px;width:110px;height:8.9px;background:#0e0f12;"></div>
<div class="a" style="left:1357.9px;top:583.58px;width:103.4px;height:8.9px;background:#02dd8d;"></div>
<div class="a" style="left:1573px;top:583.58px;width:110px;height:8.9px;background:#0e0f12;"></div>
<div class="a" style="left:1573px;top:583.58px;width:26.4px;height:8.9px;background:#02dd8d;"></div>
<div class="a" style="left:764.8px;top:632.01px;width:110px;height:8.9px;background:#0e0f12;"></div>
<div class="a" style="left:764.8px;top:632.01px;width:2.2px;height:8.9px;background:#ffca5a;"></div>
<div class="a" style="left:1357.9px;top:632.01px;width:110px;height:8.9px;background:#0e0f12;"></div>
<div class="a" style="left:1357.9px;top:632.01px;width:36.3px;height:8.9px;background:#ffca5a;"></div>
<div class="a" style="left:764.8px;top:680.4399999999999px;width:110px;height:8.9px;background:#0e0f12;"></div>
<div class="a" style="left:764.8px;top:680.4399999999999px;width:10px;height:8.9px;background:#ffca5a;"></div>
<div class="a" style="left:764.8px;top:728.87px;width:110px;height:8.9px;background:#0e0f12;"></div>
<div class="a" style="left:764.8px;top:728.87px;width:5.5px;height:8.9px;background:#ffca5a;"></div>
<svg class="a" style="left:1599.300px;top:1109.300px" width="10" height="12" viewBox="0 0 10 12" fill="none" stroke="#4b4e55" stroke-width="1.300"><path d="M8.200 1.300 2 6l6.200 4.700"/></svg>
<div class="a" style="left:1630px;top:1097px;width:36px;height:35px;background:#3e68f0;border-radius:4px;"></div>
<svg class="a" style="left:1775.600px;top:1109.300px" width="10" height="12" viewBox="0 0 10 12" fill="none" stroke="#d7d8da" stroke-width="1.300"><path d="M1.800 1.300 8 6l-6.200 4.700"/></svg>
<div class="a" style="left:1815px;top:1097px;width:100px;height:35px;background:#16171b;border:1px solid #2a2f3d;border-radius:2px;"></div>
<svg class="a" style="left:1888.60px;top:1106.00px;" width="18" height="18" viewBox="0 0 24 24" fill="none" stroke="#5d6169" stroke-width="1.6" stroke-linecap="round" stroke-linejoin="round"><path d="m6 9 6 6 6-6"/></svg>
<div class="t" id="t0" style="left:301.6px;top:76.50px;font-size:13px;line-height:20px;color:#e9eaeb;font-weight:700;transform:scaleX(0.9724);transform-origin:0 50%;">localhost</div>
<div class="t" id="t1" style="left:358.2px;top:76.50px;font-size:13px;line-height:20px;color:#abadb1;-webkit-text-stroke:0.25px;transform:scaleX(1.0580);transform-origin:0 50%;">:8080/infrastructure-monitoring/kubernetes?filters=%7b%22items%22%3a%5b%5d%2c%22op%22%3a%22and%22%7d&amp;orderby=%7b%22columnname%22%3a%22memory_request%22%2c%22order%22%3a%22desc%22%7d</div>
<div class="t" id="t2" style="left:175.8px;top:115.70px;font-size:14.5px;line-height:22px;color:#f0f1f2;-webkit-text-stroke:0.4px;transform:scaleX(1.0249);transform-origin:0 50%;">Hosts</div>
<div class="t" id="t3" style="left:276.7px;top:115.70px;font-size:14.5px;line-height:22px;color:#4e74f8;-webkit-text-stroke:0.4px;transform:scaleX(1.0327);transform-origin:0 50%;">Kubernetes</div>
<div class="t" id="t4" style="left:1938.7px;top:116.50px;font-size:13.5px;line-height:20px;color:#c0c1c3;-webkit-text-stroke:0.25px;transform:scaleX(0.9714);transform-origin:0 50%;">Share</div>
<div class="t" id="t5" style="left:149.5px;top:161.10px;font-size:14.5px;line-height:22px;color:#f3f4f5;-webkit-text-stroke:0.25px;transform:scaleX(1.0308);transform-origin:0 50%;">Filters</div>
<div class="t" id="t6" style="left:178.2px;top:207.00px;font-size:14.5px;line-height:22px;color:#e6e7e8;-webkit-text-stroke:0.25px;transform:scaleX(1.0042);transform-origin:0 50%;">Pods</div>
<div class="t" id="t7" style="left:181.4px;top:256.30px;font-size:14.5px;line-height:22px;color:#c0c1c3;-webkit-text-stroke:0.25px;transform:scaleX(1.0847);transform-origin:0 50%;">Pod</div>
<div class="t" id="t8" style="left:379.8px;top:257.80px;font-size:12.5px;line-height:19px;color:#4e74f8;-webkit-text-stroke:0.25px;transform:scaleX(1.1086);transform-origin:0 50%;">Clear All</div>
<div class="t" id="t9" style="left:173.4px;top:298.00px;font-size:14.5px;line-height:22px;color:#4d5158;-webkit-text-stroke:0.25px;transform:scaleX(1.0413);transform-origin:0 50%;">Filter values</div>
<div class="t" id="t10" style="left:191.2px;top:340.00px;font-size:14.5px;line-height:22px;color:#eceded;-webkit-text-stroke:0.25px;transform:scaleX(1.0846);transform-origin:0 50%;">kube-proxy-89xz2</div>
<div class="t" id="t11" style="left:191.2px;top:372.00px;font-size:14.5px;line-height:22px;color:#eceded;-webkit-text-stroke:0.25px;transform:scaleX(1.0830);transform-origin:0 50%;">postgres-0</div>
<div class="t" id="t12" style="left:191.2px;top:404.00px;font-size:14.5px;line-height:22px;color:#eceded;-webkit-text-stroke:0.25px;transform:scaleX(1.0875);transform-origin:0 50%;">vpnkit-controller</div>
<div class="t" id="t13" style="left:191.2px;top:436.00px;font-size:14.5px;line-height:22px;color:#eceded;-webkit-text-stroke:0.25px;transform:scaleX(1.0913);transform-origin:0 50%;">coredns-7c65d6cfc9-gx2t6</div>
<div class="t" id="t14" style="left:191.2px;top:468.00px;font-size:14.5px;line-height:22px;color:#eceded;-webkit-text-stroke:0.25px;transform:scaleX(1.0683);transform-origin:0 50%;">storage-provisioner</div>
<div class="t" id="t15" style="left:191.2px;top:500.00px;font-size:14.5px;line-height:22px;color:#eceded;-webkit-text-stroke:0.25px;transform:scaleX(1.0908);transform-origin:0 50%;">etcd-docker-desktop</div>
<div class="t" id="t16" style="left:191.2px;top:532.00px;font-size:14.5px;line-height:22px;color:#eceded;-webkit-text-stroke:0.25px;transform:scaleX(1.0873);transform-origin:0 50%;">coredns-7c65d6cfc9-xpq56</div>
<div class="t" id="t17" style="left:191.2px;top:564.00px;font-size:14.5px;line-height:22px;color:#eceded;-webkit-text-stroke:0.25px;transform:scaleX(1.1070);transform-origin:0 50%;">grocery-api-5fb4f9d6df-g7czc</div>
<div class="t" id="t18" style="left:191.2px;top:595.00px;font-size:14.5px;line-height:22px;color:#eceded;-webkit-text-stroke:0.25px;transform:scaleX(1.1161);transform-origin:0 50%;">grocery-api-5fb4f9d6df-zw864</div>
<div class="t" id="t19" style="left:191.2px;top:627.00px;font-size:14.5px;line-height:22px;color:#eceded;-webkit-text-stroke:0.25px;transform:scaleX(1.0764);transform-origin:0 50%;">kube-controller-manager-docker-...</div>
<div class="t" id="t20" style="left:252.1px;top:664.30px;font-size:14px;line-height:21px;color:#4e74f8;-webkit-text-stroke:0.25px;transform:scaleX(1.0693);transform-origin:0 50%;">Show More...</div>
<div class="t" id="t21" style="left:181.3px;top:711.90px;font-size:14.5px;line-height:22px;color:#c0c1c3;-webkit-text-stroke:0.25px;transform:scaleX(1.1063);transform-origin:0 50%;">Namespace</div>
<div class="t" id="t22" style="left:181.3px;top:759.07px;font-size:14.5px;line-height:22px;color:#c0c1c3;-webkit-text-stroke:0.25px;transform:scaleX(1.1075);transform-origin:0 50%;">Node</div>
<div class="t" id="t23" style="left:181.3px;top:806.24px;font-size:14.5px;line-height:22px;color:#c0c1c3;-webkit-text-stroke:0.25px;transform:scaleX(1.1059);transform-origin:0 50%;">Cluster</div>
<div class="t" id="t24" style="left:181.3px;top:853.41px;font-size:14.5px;line-height:22px;color:#c0c1c3;-webkit-text-stroke:0.25px;transform:scaleX(1.1141);transform-origin:0 50%;">Deployment</div>
<div class="t" id="t25" style="left:181.3px;top:900.58px;font-size:14.5px;line-height:22px;color:#c0c1c3;-webkit-text-stroke:0.25px;transform:scaleX(1.1238);transform-origin:0 50%;">Statefulset</div>
<div class="t" id="t26" style="left:181.3px;top:947.75px;font-size:14.5px;line-height:22px;color:#c0c1c3;-webkit-text-stroke:0.25px;transform:scaleX(1.0917);transform-origin:0 50%;">DaemonSet</div>
<div class="t" id="t27" style="left:181.3px;top:994.92px;font-size:14.5px;line-height:22px;color:#c0c1c3;-webkit-text-stroke:0.25px;transform:scaleX(1.1543);transform-origin:0 50%;">Job</div>
<div class="t" id="t28" style="left:181.3px;top:1042.09px;font-size:14.5px;line-height:22px;color:#c0c1c3;-webkit-text-stroke:0.25px;transform:scaleX(1.1080);transform-origin:0 50%;">Environment</div>
<div class="t" id="t29" style="left:173.4px;top:1083.00px;font-size:14.5px;line-height:22px;color:#4d5158;-webkit-text-stroke:0.25px;transform:scaleX(1.0413);transform-origin:0 50%;">Filter values</div>
<div class="t" id="t30" style="left:241.3px;top:1125.70px;font-size:14.5px;line-height:22px;color:#f3f4f5;-webkit-text-stroke:0.25px;transform:scaleX(1.0477);transform-origin:0 50%;">No values found</div>
<div class="t" id="t31" style="left:470.5px;top:168.40px;font-size:14px;line-height:21px;color:#52555c;-webkit-text-stroke:0.25px;transform:scaleX(1.0089);transform-origin:0 50%;">Search Filter : select options from suggested values, for IN/NOT IN operators - press "Enter" after sele..</div>
<div class="t" id="t32" style="left:1157.5px;top:168.70px;font-size:14px;line-height:21px;color:#f3f4f5;-webkit-text-stroke:0.25px;transform:scaleX(1.0661);transform-origin:0 50%;">Group by</div>
<div class="t" id="t33" style="left:1239px;top:168.40px;font-size:14px;line-height:21px;color:#52555c;-webkit-text-stroke:0.25px;transform:scaleX(1.0079);transform-origin:0 50%;">Search for attribute</div>
<div class="t" id="t34" style="left:1655.4px;top:167.60px;font-size:15px;line-height:22px;color:#f3f4f5;-webkit-text-stroke:0.35px;transform:scaleX(1.0103);transform-origin:0 50%;">Last 30 minutes</div>
<div class="t" id="t35" style="left:461.6px;top:230.60px;font-size:11.4px;line-height:17px;color:#c0c1c3;font-weight:700;letter-spacing:0.502px;transform:scaleX(1.06);transform-origin:0 50%;">POD NAME</div>
<div class="t" id="t36" style="left:764.6px;top:230.60px;font-size:11.4px;line-height:17px;color:#c0c1c3;font-weight:700;letter-spacing:0.363px;transform:scaleX(1.06);transform-origin:0 50%;">CPU REQ USAGE (%)</div>
<div class="t" id="t37" style="left:975.7px;top:230.60px;font-size:11.4px;line-height:17px;color:#c0c1c3;font-weight:700;letter-spacing:0.483px;transform:scaleX(1.06);transform-origin:0 50%;">CPU LIMIT USAGE (%)</div>
<div class="t" id="t38" style="left:1190.4px;top:220.50px;font-size:11.4px;line-height:17px;color:#c0c1c3;font-weight:700;letter-spacing:0.260px;transform:scaleX(1.06);transform-origin:0 50%;">CPU USAGE</div>
<div class="t" id="t39" style="left:1190.4px;top:240.50px;font-size:11.4px;line-height:17px;color:#c0c1c3;font-weight:700;letter-spacing:0.365px;transform:scaleX(1.06);transform-origin:0 50%;">(CORES)</div>
<div class="t" id="t40" style="left:1358px;top:229.90px;font-size:12.3px;line-height:18px;color:#c0c1c3;font-weight:700;letter-spacing:0.492px;transform:scaleX(1.06);transform-origin:0 50%;">MEM REQ USAGE (%)</div>
<div class="t" id="t41" style="left:1573.2px;top:230.60px;font-size:11.4px;line-height:17px;color:#c0c1c3;font-weight:700;letter-spacing:0.552px;transform:scaleX(1.06);transform-origin:0 50%;">MEM LIMIT USAGE (%)</div>
<div class="t" id="t42" style="left:1788px;top:230.60px;font-size:11.4px;line-height:17px;color:#c0c1c3;font-weight:700;letter-spacing:0.487px;transform:scaleX(1.06);transform-origin:0 50%;">MEM USAGE (WSS)</div>
<div class="t" id="t43" style="left:461.6px;top:285.70px;font-size:13.7px;line-height:21px;color:#ffffff;-webkit-text-stroke:0.33px;transform:scaleX(1.0692);transform-origin:0 50%;">k8s-infra-otel-deployment-c8f767cdd-gb...</div>
<div class="t" id="t44" style="left:883.8px;top:287.30px;font-size:11.4px;line-height:17px;color:#e0e1e3;-webkit-text-stroke:0.2px;transform:scaleX(1.0012);transform-origin:0 50%;">0.9%</div>
<div class="t" id="t45" style="left:975.1999999999999px;top:285.70px;font-size:13.7px;line-height:21px;color:#f0f0f0;-webkit-text-stroke:0.5px;transform:scaleX(1.3589);transform-origin:0 50%;">-</div>
<div class="t" id="t46" style="left:1190.8px;top:285.70px;font-size:13.7px;line-height:21px;color:#ffffff;-webkit-text-stroke:0.33px;transform:scaleX(1.0145);transform-origin:0 50%;">0.00091</div>
<div class="t" id="t47" style="left:1476.9px;top:287.30px;font-size:11.4px;line-height:17px;color:#e0e1e3;-webkit-text-stroke:0.2px;transform:scaleX(0.9574);transform-origin:0 50%;">134%</div>
<div class="t" id="t48" style="left:1573.3px;top:285.70px;font-size:13.7px;line-height:21px;color:#f0f0f0;-webkit-text-stroke:0.5px;transform:scaleX(1.3589);transform-origin:0 50%;">-</div>
<div class="t" id="t49" style="left:1788.4px;top:285.70px;font-size:13.7px;line-height:21px;color:#ffffff;-webkit-text-stroke:0.33px;transform:scaleX(0.9788);transform-origin:0 50%;">133.85 MB</div>
<div class="t" id="t50" style="left:461.6px;top:334.13px;font-size:13.7px;line-height:21px;color:#ffffff;-webkit-text-stroke:0.33px;transform:scaleX(1.0684);transform-origin:0 50%;">etcd-docker-desktop</div>
<div class="t" id="t51" style="left:883.8px;top:335.73px;font-size:11.4px;line-height:17px;color:#e0e1e3;-webkit-text-stroke:0.2px;transform:scaleX(0.9162);transform-origin:0 50%;">14%</div>
<div class="t" id="t52" style="left:975.1999999999999px;top:334.13px;font-size:13.7px;line-height:21px;color:#f0f0f0;-webkit-text-stroke:0.5px;transform:scaleX(1.3589);transform-origin:0 50%;">-</div>
<div class="t" id="t53" style="left:1190.8px;top:334.13px;font-size:13.7px;line-height:21px;color:#ffffff;-webkit-text-stroke:0.33px;transform:scaleX(0.9384);transform-origin:0 50%;">0.01</div>
<div class="t" id="t54" style="left:1476.9px;top:335.73px;font-size:11.4px;line-height:17px;color:#e0e1e3;-webkit-text-stroke:0.2px;transform:scaleX(0.8941);transform-origin:0 50%;">112%</div>
<div class="t" id="t55" style="left:1573.3px;top:334.13px;font-size:13.7px;line-height:21px;color:#f0f0f0;-webkit-text-stroke:0.5px;transform:scaleX(1.3589);transform-origin:0 50%;">-</div>
<div class="t" id="t56" style="left:1788.4px;top:334.13px;font-size:13.7px;line-height:21px;color:#ffffff;-webkit-text-stroke:0.33px;transform:scaleX(0.9762);transform-origin:0 50%;">97.86 MB</div>
<div class="t" id="t57" style="left:461.6px;top:382.56px;font-size:13.7px;line-height:21px;color:#ffffff;-webkit-text-stroke:0.33px;transform:scaleX(1.0868);transform-origin:0 50%;">grocery-api-5fb4f9d6df-xxrr5</div>
<div class="t" id="t58" style="left:883.8px;top:384.16px;font-size:11.4px;line-height:17px;color:#e0e1e3;-webkit-text-stroke:0.2px;transform:scaleX(0.9230);transform-origin:0 50%;">7%</div>
<div class="t" id="t59" style="left:1094.8px;top:384.16px;font-size:11.4px;line-height:17px;color:#e0e1e3;-webkit-text-stroke:0.2px;transform:scaleX(0.9412);transform-origin:0 50%;">2%</div>
<div class="t" id="t60" style="left:1190.8px;top:382.56px;font-size:13.7px;line-height:21px;color:#ffffff;-webkit-text-stroke:0.33px;transform:scaleX(1.0388);transform-origin:0 50%;">0.0037</div>
<div class="t" id="t61" style="left:1476.9px;top:384.16px;font-size:11.4px;line-height:17px;color:#e0e1e3;-webkit-text-stroke:0.2px;transform:scaleX(0.9471);transform-origin:0 50%;">102%</div>
<div class="t" id="t62" style="left:1692px;top:384.16px;font-size:11.4px;line-height:17px;color:#e0e1e3;-webkit-text-stroke:0.2px;transform:scaleX(0.9863);transform-origin:0 50%;">26%</div>
<div class="t" id="t63" style="left:1788.4px;top:382.56px;font-size:13.7px;line-height:21px;color:#ffffff;-webkit-text-stroke:0.33px;transform:scaleX(0.9108);transform-origin:0 50%;">127.41 MB</div>
<div class="t" id="t64" style="left:461.6px;top:430.99px;font-size:13.7px;line-height:21px;color:#ffffff;-webkit-text-stroke:0.33px;transform:scaleX(1.0830);transform-origin:0 50%;">grocery-api-5fb4f9d6df-g7czc</div>
<div class="t" id="t65" style="left:883.8px;top:432.59px;font-size:11.4px;line-height:17px;color:#e0e1e3;-webkit-text-stroke:0.2px;transform:scaleX(0.9594);transform-origin:0 50%;">8%</div>
<div class="t" id="t66" style="left:1094.8px;top:432.59px;font-size:11.4px;line-height:17px;color:#e0e1e3;-webkit-text-stroke:0.2px;transform:scaleX(0.9412);transform-origin:0 50%;">2%</div>
<div class="t" id="t67" style="left:1190.8px;top:430.99px;font-size:13.7px;line-height:21px;color:#ffffff;-webkit-text-stroke:0.33px;transform:scaleX(1.0627);transform-origin:0 50%;">0.0042</div>
<div class="t" id="t68" style="left:1476.9px;top:432.59px;font-size:11.4px;line-height:17px;color:#e0e1e3;-webkit-text-stroke:0.2px;transform:scaleX(0.8854);transform-origin:0 50%;">101%</div>
<div class="t" id="t69" style="left:1692px;top:432.59px;font-size:11.4px;line-height:17px;color:#e0e1e3;-webkit-text-stroke:0.2px;transform:scaleX(0.9775);transform-origin:0 50%;">25%</div>
<div class="t" id="t70" style="left:1788.4px;top:430.99px;font-size:13.7px;line-height:21px;color:#ffffff;-webkit-text-stroke:0.33px;transform:scaleX(0.9788);transform-origin:0 50%;">125.64 MB</div>
<div class="t" id="t71" style="left:461.6px;top:479.42px;font-size:13.7px;line-height:21px;color:#ffffff;-webkit-text-stroke:0.33px;transform:scaleX(1.0914);transform-origin:0 50%;">grocery-api-5fb4f9d6df-lzpdp</div>
<div class="t" id="t72" style="left:883.8px;top:481.02px;font-size:11.4px;line-height:17px;color:#e0e1e3;-webkit-text-stroke:0.2px;transform:scaleX(0.9594);transform-origin:0 50%;">9%</div>
<div class="t" id="t73" style="left:1094.8px;top:481.02px;font-size:11.4px;line-height:17px;color:#e0e1e3;-webkit-text-stroke:0.2px;transform:scaleX(0.9412);transform-origin:0 50%;">2%</div>
<div class="t" id="t74" style="left:1190.8px;top:479.42px;font-size:13.7px;line-height:21px;color:#ffffff;-webkit-text-stroke:0.33px;transform:scaleX(1.0699);transform-origin:0 50%;">0.0044</div>
<div class="t" id="t75" style="left:1476.9px;top:481.02px;font-size:11.4px;line-height:17px;color:#e0e1e3;-webkit-text-stroke:0.2px;transform:scaleX(0.9995);transform-origin:0 50%;">96%</div>
<div class="t" id="t76" style="left:1692px;top:481.02px;font-size:11.4px;line-height:17px;color:#e0e1e3;-webkit-text-stroke:0.2px;transform:scaleX(0.9951);transform-origin:0 50%;">24%</div>
<div class="t" id="t77" style="left:1788.4px;top:479.42px;font-size:13.7px;line-height:21px;color:#ffffff;-webkit-text-stroke:0.33px;transform:scaleX(0.9833);transform-origin:0 50%;">120.34 MB</div>
<div class="t" id="t78" style="left:461.6px;top:527.85px;font-size:13.7px;line-height:21px;color:#ffffff;-webkit-text-stroke:0.33px;transform:scaleX(1.0916);transform-origin:0 50%;">grocery-api-5fb4f9d6df-4w6sb</div>
<div class="t" id="t79" style="left:883.8px;top:529.45px;font-size:11.4px;line-height:17px;color:#e0e1e3;-webkit-text-stroke:0.2px;transform:scaleX(0.9594);transform-origin:0 50%;">6%</div>
<div class="t" id="t80" style="left:1094.8px;top:529.45px;font-size:11.4px;line-height:17px;color:#e0e1e3;-webkit-text-stroke:0.2px;transform:scaleX(0.9412);transform-origin:0 50%;">2%</div>
<div class="t" id="t81" style="left:1190.8px;top:527.85px;font-size:13.7px;line-height:21px;color:#ffffff;-webkit-text-stroke:0.33px;transform:scaleX(1.0507);transform-origin:0 50%;">0.0033</div>
<div class="t" id="t82" style="left:1476.9px;top:529.45px;font-size:11.4px;line-height:17px;color:#e0e1e3;-webkit-text-stroke:0.2px;transform:scaleX(0.9907);transform-origin:0 50%;">95%</div>
<div class="t" id="t83" style="left:1692px;top:529.45px;font-size:11.4px;line-height:17px;color:#e0e1e3;-webkit-text-stroke:0.2px;transform:scaleX(0.9951);transform-origin:0 50%;">24%</div>
<div class="t" id="t84" style="left:1788.4px;top:527.85px;font-size:13.7px;line-height:21px;color:#ffffff;-webkit-text-stroke:0.33px;transform:scaleX(0.9803);transform-origin:0 50%;">120.99 MB</div>
<div class="t" id="t85" style="left:461.6px;top:576.28px;font-size:13.7px;line-height:21px;color:#ffffff;-webkit-text-stroke:0.33px;transform:scaleX(1.0916);transform-origin:0 50%;">grocery-api-5fb4f9d6df-zw864</div>
<div class="t" id="t86" style="left:883.8px;top:577.88px;font-size:11.4px;line-height:17px;color:#e0e1e3;-webkit-text-stroke:0.2px;transform:scaleX(0.9594);transform-origin:0 50%;">8%</div>
<div class="t" id="t87" style="left:1094.8px;top:577.88px;font-size:11.4px;line-height:17px;color:#e0e1e3;-webkit-text-stroke:0.2px;transform:scaleX(0.9412);transform-origin:0 50%;">2%</div>
<div class="t" id="t88" style="left:1190.8px;top:576.28px;font-size:13.7px;line-height:21px;color:#ffffff;-webkit-text-stroke:0.33px;transform:scaleX(1.0507);transform-origin:0 50%;">0.0039</div>
<div class="t" id="t89" style="left:1476.9px;top:577.88px;font-size:11.4px;line-height:17px;color:#e0e1e3;-webkit-text-stroke:0.2px;transform:scaleX(1.0082);transform-origin:0 50%;">94%</div>
<div class="t" id="t90" style="left:1692px;top:577.88px;font-size:11.4px;line-height:17px;color:#e0e1e3;-webkit-text-stroke:0.2px;transform:scaleX(0.9951);transform-origin:0 50%;">24%</div>
<div class="t" id="t91" style="left:1788.4px;top:576.28px;font-size:13.7px;line-height:21px;color:#ffffff;-webkit-text-stroke:0.33px;transform:scaleX(0.9496);transform-origin:0 50%;">119.02 MB</div>
<div class="t" id="t92" style="left:461.6px;top:624.71px;font-size:13.7px;line-height:21px;color:#ffffff;-webkit-text-stroke:0.33px;transform:scaleX(1.0778);transform-origin:0 50%;">metrics-server-bf688598-d6q4x</div>
<div class="t" id="t93" style="left:883.8px;top:626.31px;font-size:11.4px;line-height:17px;color:#e0e1e3;-webkit-text-stroke:0.2px;transform:scaleX(0.9412);transform-origin:0 50%;">2%</div>
<div class="t" id="t94" style="left:975.1999999999999px;top:624.71px;font-size:13.7px;line-height:21px;color:#f0f0f0;-webkit-text-stroke:0.5px;transform:scaleX(1.3589);transform-origin:0 50%;">-</div>
<div class="t" id="t95" style="left:1190.8px;top:624.71px;font-size:13.7px;line-height:21px;color:#ffffff;-webkit-text-stroke:0.33px;transform:scaleX(1.0507);transform-origin:0 50%;">0.0023</div>
<div class="t" id="t96" style="left:1476.9px;top:626.31px;font-size:11.4px;line-height:17px;color:#e0e1e3;-webkit-text-stroke:0.2px;transform:scaleX(0.9995);transform-origin:0 50%;">33%</div>
<div class="t" id="t97" style="left:1573.3px;top:624.71px;font-size:13.7px;line-height:21px;color:#f0f0f0;-webkit-text-stroke:0.5px;transform:scaleX(1.3589);transform-origin:0 50%;">-</div>
<div class="t" id="t98" style="left:1788.4px;top:624.71px;font-size:13.7px;line-height:21px;color:#ffffff;-webkit-text-stroke:0.33px;transform:scaleX(1.0035);transform-origin:0 50%;">66.65 MB</div>
<div class="t" id="t99" style="left:461.6px;top:673.14px;font-size:13.7px;line-height:21px;color:#ffffff;-webkit-text-stroke:0.33px;transform:scaleX(1.0579);transform-origin:0 50%;">kube-apiserver-docker-desktop</div>
<div class="t" id="t100" style="left:883.8px;top:674.74px;font-size:11.4px;line-height:17px;color:#e0e1e3;-webkit-text-stroke:0.2px;transform:scaleX(0.9594);transform-origin:0 50%;">9%</div>
<div class="t" id="t101" style="left:975.1999999999999px;top:673.14px;font-size:13.7px;line-height:21px;color:#f0f0f0;-webkit-text-stroke:0.5px;transform:scaleX(1.3589);transform-origin:0 50%;">-</div>
<div class="t" id="t102" style="left:1190.8px;top:673.14px;font-size:13.7px;line-height:21px;color:#ffffff;-webkit-text-stroke:0.33px;transform:scaleX(1.0210);transform-origin:0 50%;">0.02</div>
<div class="t" id="t103" style="left:1358.2px;top:673.14px;font-size:13.7px;line-height:21px;color:#f0f0f0;-webkit-text-stroke:0.5px;transform:scaleX(1.3589);transform-origin:0 50%;">-</div>
<div class="t" id="t104" style="left:1573.3px;top:673.14px;font-size:13.7px;line-height:21px;color:#f0f0f0;-webkit-text-stroke:0.5px;transform:scaleX(1.3589);transform-origin:0 50%;">-</div>
<div class="t" id="t105" style="left:1788.4px;top:673.14px;font-size:13.7px;line-height:21px;color:#ffffff;-webkit-text-stroke:0.33px;transform:scaleX(1.0069);transform-origin:0 50%;">296.8 MB</div>
<div class="t" id="t106" style="left:461.6px;top:721.57px;font-size:13.7px;line-height:21px;color:#ffffff;-webkit-text-stroke:0.33px;transform:scaleX(1.0539);transform-origin:0 50%;">kube-controller-manager-docker-desktop</div>
<div class="t" id="t107" style="left:883.8px;top:723.17px;font-size:11.4px;line-height:17px;color:#e0e1e3;-webkit-text-stroke:0.2px;transform:scaleX(0.9472);transform-origin:0 50%;">5%</div>
<div class="t" id="t108" style="left:975.1999999999999px;top:721.57px;font-size:13.7px;line-height:21px;color:#f0f0f0;-webkit-text-stroke:0.5px;transform:scaleX(1.3589);transform-origin:0 50%;">-</div>
<div class="t" id="t109" style="left:1190.8px;top:721.57px;font-size:13.7px;line-height:21px;color:#ffffff;-webkit-text-stroke:0.33px;transform:scaleX(0.9384);transform-origin:0 50%;">0.01</div>
<div class="t" id="t110" style="left:1358.2px;top:721.57px;font-size:13.7px;line-height:21px;color:#f0f0f0;-webkit-text-stroke:0.5px;transform:scaleX(1.3589);transform-origin:0 50%;">-</div>
<div class="t" id="t111" style="left:1573.3px;top:721.57px;font-size:13.7px;line-height:21px;color:#f0f0f0;-webkit-text-stroke:0.5px;transform:scaleX(1.3589);transform-origin:0 50%;">-</div>
<div class="t" id="t112" style="left:1788.4px;top:721.57px;font-size:13.7px;line-height:21px;color:#ffffff;-webkit-text-stroke:0.33px;transform:scaleX(0.8821);transform-origin:0 50%;">121.18 MB</div>
<div class="t" id="t113" style="left:1644.1px;top:1104.20px;font-size:14.5px;line-height:22px;color:#08090b;-webkit-text-stroke:0.45px;">1</div>
<div class="t" id="t114" style="left:1688px;top:1104.20px;font-size:14.5px;line-height:22px;color:#f0f1f2;-webkit-text-stroke:0.35px;transform:scaleX(1.0398);transform-origin:0 50%;">2</div>
<div class="t" id="t115" style="left:1731.9px;top:1104.20px;font-size:14.5px;line-height:22px;color:#f0f1f2;-webkit-text-stroke:0.35px;transform:scaleX(1.0398);transform-origin:0 50%;">3</div>
<div class="t" id="t116" style="left:1828.3px;top:1105.00px;font-size:13.5px;line-height:20px;color:#d7d8da;-webkit-text-stroke:0.25px;transform:scaleX(1.0122);transform-origin:0 50%;">10 / page</div>
</div></div></body></html>
